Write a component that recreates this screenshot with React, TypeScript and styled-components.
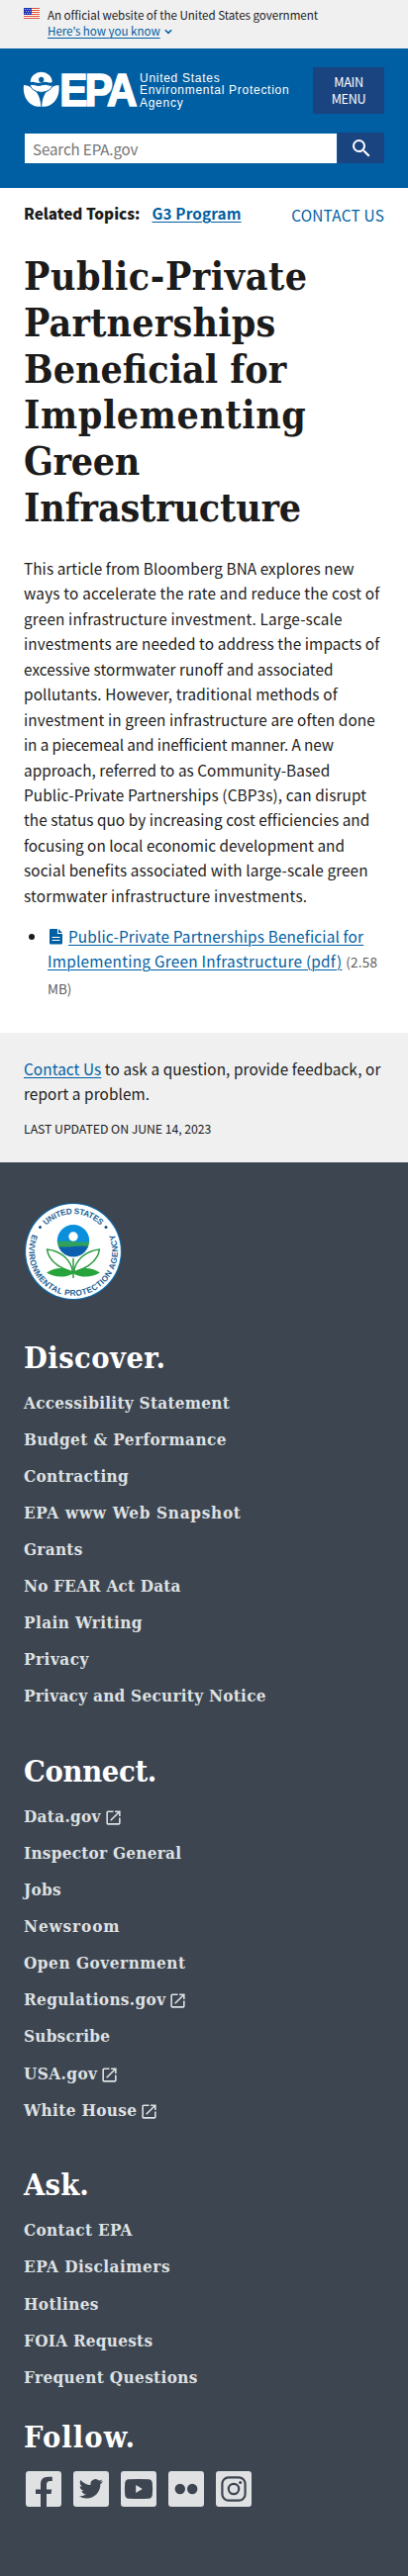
import React from "react";
import styled, { createGlobalStyle } from "styled-components";

const sans = '"Noto Sans CJK JP", "Noto Sans", sans-serif';
const serif = '"DejaVu Serif Condensed", "DejaVu Serif", serif';
const link = "#005ea2";

const GlobalStyle = createGlobalStyle`
  *, *::before, *::after { box-sizing: border-box; }
  body {
    margin: 0;
    background: #fff;
    color: #1b1b1b;
    font: 15.3px/25.44px ${sans};
  }
  a { color: ${link}; text-decoration: underline; text-underline-offset: 2px; text-decoration-thickness: 1px; }
  h1, h2, p, ul { margin: 0; padding: 0; }
  ul { list-style: none; }
`;

const Page = styled.div`
  width: 412px;
`;

/* Government banner */
const Banner = styled.section`
  display: flex;
  height: 49px;
  padding: 7px 24px 0;
  gap: 8px;
  background: #f0f0f0;
  font-size: 11.6px;
  line-height: 16.2px;
`;
const Flag = styled.svg`
  width: 16px;
  height: 11px;
  margin-top: 1px;
`;
const BannerLine = styled.div`
  display: flex;
  align-items: center;
  gap: 4px;
  white-space: nowrap;
  letter-spacing: -0.04px;
`;
const Chevron = styled.svg`
  width: 8px;
  height: 6px;
  margin-top: 2px;
`;

/* Site header */
const Header = styled.header`
  height: 141px;
  padding: 19px 24px 0;
  background: ${link};
`;
const HeaderTop = styled.div`
  display: flex;
  justify-content: space-between;
  height: 47px;
`;
const Brand = styled.div`
  display: flex;
  gap: 2px;
  padding-top: 4px;
`;
const BrandMark = styled.svg`
  width: 115px;
  height: 38px;
  overflow: visible;
`;
const BrandName = styled.div`
  padding-top: 0.5px;
  color: #fff;
  font: 12px/12.8px "Liberation Sans", Arial, sans-serif;
  letter-spacing: 0.72px;
  white-space: nowrap;
`;
const MenuButton = styled.button`
  width: 72px;
  height: 47px;
  padding: 0 16px;
  border: 0;
  background: #1a4480;
  color: #fff;
  font: 12.6px/16.2px ${sans};
  letter-spacing: -0.3px;
`;
const SearchBar = styled.form`
  display: flex;
  height: 31px;
  margin-top: 19px;
`;
const SearchInput = styled.input`
  width: 317px;
  height: 32px;
  padding: 0 8px;
  border: 1px solid ${link};
  border-radius: 0;
  background: #fff;
  font: 15.1px/24px ${sans};
  letter-spacing: -0.1px;
  &::placeholder { color: #757575; opacity: 1; }
`;
const SearchButton = styled.button`
  display: grid;
  place-items: center;
  flex: 1;
  padding: 0;
  border: 0;
  background: #1a4480;
`;
const SearchIcon = styled.svg`
  width: 24px;
  height: 24px;
  fill: #fff;
`;

/* Article */
const Main = styled.main`
  height: 854px;
  padding: 12.5px 24px 0;
`;
const TopicRow = styled.div`
  display: flex;
  justify-content: space-between;
`;
const Topics = styled.div`
  display: flex;
  gap: 12px;
  font-weight: 700;
`;
const TopicLink = styled.a`
  letter-spacing: 0.13px;
`;
const ContactLink = styled.a`
  margin-top: 2px;
  text-decoration: none;
  letter-spacing: 0.25px;
`;
const Title = styled.h1`
  margin-top: 26px;
  font: 700 39px/46.85px ${serif};
`;
const Line = styled.span<{ $track: number }>`
  display: block;
  width: max-content;
  white-space: nowrap;
  letter-spacing: ${(p) => p.$track}px;
`;
const Body = styled.p`
  margin-top: 25px;
`;
const Files = styled.ul`
  margin-top: 15.7px;
  padding-left: 24px;
  list-style: disc;
`;
const FileIcon = styled.svg`
  width: 15px;
  height: 17px;
  margin: 0 5px 0 1px;
  vertical-align: -2px;
`;
const FileSize = styled.span`
  color: #5c5c5c;
  font-size: 13.5px;
`;

/* Feedback strip */
const Feedback = styled.section`
  height: 131px;
  padding: 23.6px 24px 0;
  background: #f0f0f0;
`;
const Updated = styled.p`
  margin-top: 13px;
  font-size: 12.3px;
  line-height: 20.9px;
  letter-spacing: -0.06px;
`;

/* Footer */
const Footer = styled.footer`
  height: 1429px;
  padding: 40px 24px 0;
  background: #3d4551;
  font-family: ${serif};
  font-weight: 700;
`;
const Seal = styled.svg`
  display: block;
  width: 100px;
  height: 100px;
`;
const FooterGroup = styled.section<{ $gap: number }>`
  margin-top: ${(p) => p.$gap}px;
`;
const FooterHeading = styled.h2<{ $track: number }>`
  margin-bottom: 10.2px;
  color: #fff;
  font-size: 30.5px;
  line-height: 36px;
  letter-spacing: ${(p) => p.$track}px;
`;
const FooterItem = styled.li`
  display: flex;
  align-items: center;
  height: 37.05px;
`;
const FooterLink = styled.a<{ $track: number }>`
  color: #dfe1e2;
  font-size: 17px;
  line-height: 25px;
  text-decoration: none;
  letter-spacing: ${(p) => p.$track}px;
`;
const ExternalIcon = styled.svg`
  width: 19px;
  height: 19px;
  margin: 2px 0 0 3px;
  fill: #dfe1e2;
`;
const SocialRow = styled.div`
  display: flex;
  margin: 3.6px 0 0 -4px;
`;
const SocialIcon = styled.svg`
  width: 48px;
  height: 48px;
`;

const titleLines: [string, number][] = [
  ["Public-Private", 0.55],
  ["Partnerships", 0.2],
  ["Beneficial for", 0],
  ["Implementing", 0.6],
  ["Green", -0.35],
  ["Infrastructure", -0.15],
];

const bodyLines: [string, number][] = [
  ["This article from Bloomberg BNA explores new", 0.08],
  ["ways to accelerate the rate and reduce the cost of", 0.21],
  ["green infrastructure investment. Large-scale", 0.17],
  ["investments are needed to address the impacts of", 0.13],
  ["excessive stormwater runoff and associated", 0.07],
  ["pollutants. However, traditional methods of", 0.15],
  ["investment in green infrastructure are often done", 0.11],
  ["in a piecemeal and inefficient manner. A new", -0.1],
  ["approach, referred to as Community-Based", 0.06],
  ["Public-Private Partnerships (CBP3s), can disrupt", 0.13],
  ["the status quo by increasing cost efficiencies and", 0.07],
  ["focusing on local economic development and", 0.02],
  ["social benefits associated with large-scale green", 0.12],
  ["stormwater infrastructure investments.", 0.22],
];

type Item = { label: string; track: number; external?: boolean };
type Group = { title: string; track: number; gap: number; items: Item[] };

const groups: Group[] = [
  {
    title: "Discover.", track: 0.46, gap: 38.9,
    items: [
      { label: "Accessibility Statement", track: 0.28 },
      { label: "Budget & Performance", track: 0.41 },
      { label: "Contracting", track: 0.32 },
      { label: "EPA www Web Snapshot", track: 0.72 },
      { label: "Grants", track: 0.29 },
      { label: "No FEAR Act Data", track: 0.19 },
      { label: "Plain Writing", track: 0.42 },
      { label: "Privacy", track: 0.5 },
      { label: "Privacy and Security Notice", track: 0.28 },
    ],
  },
  {
    title: "Connect.", track: -0.3, gap: 38.5,
    items: [
      { label: "Data.gov", track: 0.32, external: true },
      { label: "Inspector General", track: 0.27 },
      { label: "Jobs", track: 0.3 },
      { label: "Newsroom", track: 0.9 },
      { label: "Open Government", track: 0.55 },
      { label: "Regulations.gov", track: 0.37, external: true },
      { label: "Subscribe", track: 0.24 },
      { label: "USA.gov", track: 0.44, external: true },
      { label: "White House", track: 0.37, external: true },
    ],
  },
  {
    title: "Ask.", track: 0.2, gap: 38.6,
    items: [
      { label: "Contact EPA", track: 0.35 },
      { label: "EPA Disclaimers", track: 0.52 },
      { label: "Hotlines", track: 0.38 },
      { label: "FOIA Requests", track: 0.27 },
      { label: "Frequent Questions", track: 0.38 },
    ],
  },
];

const ink = "#3d4551";
const Plate = () => <rect x="3" y="3" width="18" height="18" rx="1.5" fill="#dfe1e2" />;

function Social() {
  return (
    <SocialRow>
      <SocialIcon viewBox="0 0 24 24" aria-label="Facebook">
        <Plate />
        <path fill={ink} d="M13.5 21.2V14.5H15.8L16.1 12.2H13.5V9.8c0-1.2.7-1.8 1.800-1.800H16.400V5.900h-2C11.800 5.900 10.500 7.300 10.500 9.500v2.700H8v2.300h2.500v6.700z" />
      </SocialIcon>
      <SocialIcon viewBox="0 0 24 24" aria-label="Twitter">
        <Plate />
        <path fill={ink} transform="translate(5.9 5.9) scale(.5)" d="M23.953 4.57a10 10 0 01-2.825.775 4.958 4.958 0 002.163-2.723c-.951.555-2.005.959-3.127 1.184a4.92 4.92 0 00-8.384 4.482C7.69 8.095 4.067 6.13 1.64 3.162a4.822 4.822 0 00-.666 2.475c0 1.71.87 3.213 2.188 4.096a4.904 4.904 0 01-2.228-.616v.06a4.923 4.923 0 003.946 4.827 4.996 4.996 0 01-2.212.085 4.936 4.936 0 004.604 3.417 9.867 9.867 0 01-6.102 2.105c-.39 0-.779-.023-1.17-.067a13.995 13.995 0 007.557 2.209c9.053 0 13.998-7.496 13.998-13.985 0-.21 0-.42-.015-.63A9.935 9.935 0 0024 4.59z" />
      </SocialIcon>
      <SocialIcon viewBox="0 0 24 24" aria-label="YouTube">
        <Plate />
        <path fill={ink} d="M7 7.1Q12 6.8 17 7.1Q18.7 7.2 18.9 9Q19.2 12 18.9 15Q18.7 16.8 17 16.9Q12 17.2 7 16.9Q5.3 16.8 5.1 15Q4.8 12 5.1 9Q5.3 7.2 7 7.1z" />
        <path fill="#dfe1e2" d="M10.6 10v4l3.3-2z" />
      </SocialIcon>
      <SocialIcon viewBox="0 0 24 24" aria-label="Flickr">
        <Plate />
        <circle cx="8.9" cy="12" r="2.6" fill={ink} />
        <circle cx="15.1" cy="12" r="2.6" fill={ink} />
      </SocialIcon>
      <SocialIcon viewBox="0 0 24 24" aria-label="Instagram">
        <Plate />
        <rect x="6.2" y="6.2" width="11.6" height="11.6" rx="3.2" fill="none" stroke={ink} strokeWidth="1.1" />
        <circle cx="12" cy="12" r="2.6" fill="none" stroke={ink} strokeWidth="1.1" />
        <circle cx="15.3" cy="8.7" r=".75" fill={ink} />
      </SocialIcon>
    </SocialRow>
  );
}

function EpaSeal() {
  return (
    <Seal viewBox="-50 -50 100 100" aria-label="EPA seal">
      <circle r="49" fill="#0d6cb0" />
      <circle r="47.9" fill="#fff" />
      <path id="seal-top" d="M-37.8 0A37.8 37.8 0 0 1 37.8 0" fill="none" />
      <path id="seal-bottom" d="M-40.9-18.2A44.8 44.8 0 1 0 40.9-18.2" fill="none" />
      <g fill="#1d5f94" fontFamily="Liberation Sans, Arial, sans-serif" fontSize="8.3" fontWeight="700">
        <text textAnchor="middle" textLength="61">
          <textPath href="#seal-top" startOffset="50%" textLength="61">UNITED STATES</textPath>
        </text>
        <text textAnchor="middle" textLength="176">
          <textPath href="#seal-bottom" startOffset="50%" textLength="176">ENVIRONMENTAL PROTECTION AGENCY</textPath>
        </text>
      </g>
      <circle cx="-33.5" cy="-24.4" r="1.5" fill="#174f80" />
      <circle cx="33" cy="-24.4" r="1.5" fill="#174f80" />
      <clipPath id="bloom"><circle cy="-10.7" r="16.2" /></clipPath>
      <g clipPath="url(#bloom)">
        <rect x="-17" y="-27" width="34" height="18" fill="#0a8fdc" />
        <path d="M-17-10Q-8-11 0-10T17-10V-4H-17z" fill="#2fa15c" />
        <path d="M-17-4.8Q-8-4 0-5T17-5V7H-17z" fill="#0b5fae" />
      </g>
      <circle cy="-15" r="4.7" fill="#fff" />
      <g fill="none" stroke="#2c9a3f" strokeWidth="1.5" strokeLinejoin="round">
        <path d="M0 7V27" />
        <path d="M-.6 21C-2 9-12-.5-26.5-2C-25 8-17 16-.6 21z" />
        <path d="M.6 21C2 9 12-.5 26.5-2C25 8 17 16 .6 21z" />
      </g>
      <path fill="#27a33c" d="M0 22C-7 15.5-17 15.5-27 21.5C-19 26.5-8 27 0 22.5C8 27 19 26.5 27 21.5C17 15.5 7 15.5 0 22z" />
    </Seal>
  );
}

function BrandLogo() {
  return (
    <Brand>
      <BrandMark viewBox="0 0 115 38" aria-label="EPA">
        <g fill="#fff">
          <path d="M6.7 11A11 10.3 0 0 1 28.700 11Q26.500 12 23.500 11Q20.500 10.200 17.700 11.300Q14 12.400 11.500 11.200Q9 10.200 6.700 11z" />
          <path d="M0 14C9 14.500 17 22 17.300 35.800C6 36.500-1.500 27 0 14z" />
          <path d="M35.400 14C26.400 14.500 18.400 22 18.100 35.800C29.400 36.500 36.900 27 35.400 14z" />
          <path stroke={link} strokeWidth="1" d="M6 13.800Q9 12.800 12 13.900Q15 15 18.500 13.800Q22 12.800 24.500 13.800Q27 14.800 29.400 14Q27 20.900 17.700 21.400Q8.500 20.900 6 13.800z" />
        </g>
        <circle cx="17.700" cy="8.400" r="2.600" fill={link} />
        <text x="36.300" y="35" fill="#fff" stroke="#fff" strokeWidth="1.700" fontFamily="Liberation Sans, Arial, sans-serif" fontSize="47" fontWeight="700" letterSpacing="-3" textLength="75.500" lengthAdjust="spacingAndGlyphs">EPA</text>
      </BrandMark>
      <BrandName>
        United States<br />Environmental Protection<br />Agency
      </BrandName>
    </Brand>
  );
}

export default function App() {
  return (
    <Page>
      <GlobalStyle />
      <Banner>
        <Flag viewBox="0 0 16 11">
          <path fill="#fff" d="M0 0h16v11H0z" />
          <path stroke="#db3e1f" strokeWidth=".9" d="M0 .5h16M0 2.5h16M0 4.5h16M0 6.5h16M0 8.5h16M0 10.5h16" />
          <path fill="#1e33b1" d="M0 0h8v7H0z" />
          <path stroke="#fff" strokeWidth=".8" strokeDasharray=".8 1.2" d="M1 1.5h6.5M2 3.5h5.5M1 5.5h6.5" />
        </Flag>
        <div>
          <BannerLine>An official website of the United States government</BannerLine>
          <BannerLine>
            <a href="#">Here’s how you know</a>
            <Chevron viewBox="0 0 8 6"><path d="M.8 1.3L4 4.4l3.2-3.1" fill="none" stroke={link} strokeWidth="1.5" /></Chevron>
          </BannerLine>
        </div>
      </Banner>

      <Header>
        <HeaderTop>
          <BrandLogo />
          <MenuButton>MAIN<br />MENU</MenuButton>
        </HeaderTop>
        <SearchBar>
          <SearchInput placeholder="Search EPA.gov" />
          <SearchButton type="button" aria-label="Search">
            <SearchIcon viewBox="0 0 24 24">
              <path d="M15.5 14h-.79l-.28-.27A6.471 6.471 0 0 0 16 9.5 6.5 6.5 0 1 0 9.5 16c1.61 0 3.09-.59 4.23-1.57l.27.28v.79l5 4.99L20.49 19l-4.99-5zm-6 0C7.01 14 5 11.99 5 9.5S7.01 5 9.5 5 14 7.01 14 9.5 11.99 14 9.5 14z" />
            </SearchIcon>
          </SearchButton>
        </SearchBar>
      </Header>

      <Main>
        <TopicRow>
          <Topics><b>Related Topics:</b><TopicLink href="#">G3 Program</TopicLink></Topics>
          <ContactLink href="#">CONTACT US</ContactLink>
        </TopicRow>
        <Title>
          {titleLines.map(([text, track]) => <Line key={text} $track={track}>{text}</Line>)}
        </Title>
        <Body>
          {bodyLines.map(([text, track]) => <Line key={text} $track={track}>{text}</Line>)}
        </Body>
        <Files>
          <li>
            <Line $track={0.18}>
              <FileIcon viewBox="0 0 15 17">
                <path fill={link} d="M2 1h7v5h5v9.5q0 1-1 1H2q-1 0-1-1V2q0-1 1-1zM10 1l4 4h-4z" />
                <path stroke="#fff" d="M3.5 9.5h8M3.5 12.5h8" />
              </FileIcon>
              <a href="#">Public-Private Partnerships Beneficial for</a>
            </Line>
            <Line $track={0.28}>
              <a href="#">Implementing Green Infrastructure (pdf)</a> <FileSize>(2.58</FileSize>
            </Line>
            <Line $track={0}><FileSize>MB)</FileSize></Line>
          </li>
        </Files>
      </Main>

      <Feedback>
        <p>
          <Line $track={0.1}><a href="#">Contact Us</a> to ask a question, provide feedback, or</Line>
          <Line $track={0.1}>report a problem.</Line>
        </p>
        <Updated>LAST UPDATED ON JUNE 14, 2023</Updated>
      </Feedback>

      <Footer>
        <EpaSeal />
        {groups.map((group) => (
          <FooterGroup key={group.title} $gap={group.gap}>
            <FooterHeading $track={group.track}>{group.title}</FooterHeading>
            <ul>
              {group.items.map((item) => (
                <FooterItem key={item.label}>
                  <FooterLink href="#" $track={item.track}>{item.label}</FooterLink>
                  {item.external && (
                    <ExternalIcon viewBox="0 0 24 24">
                      <path d="M19 19H5V5h7V3H5a2 2 0 0 0-2 2v14a2 2 0 0 0 2 2h14c1.1 0 2-.9 2-2v-7h-2v7zM14 3v2h3.59l-9.83 9.83 1.41 1.41L19 6.41V10h2V3h-7z" />
                    </ExternalIcon>
                  )}
                </FooterItem>
              ))}
            </ul>
          </FooterGroup>
        ))}
        <FooterGroup $gap={23.8}>
          <FooterHeading $track={1.1}>Follow.</FooterHeading>
          <Social />
        </FooterGroup>
      </Footer>
    </Page>
  );
}
